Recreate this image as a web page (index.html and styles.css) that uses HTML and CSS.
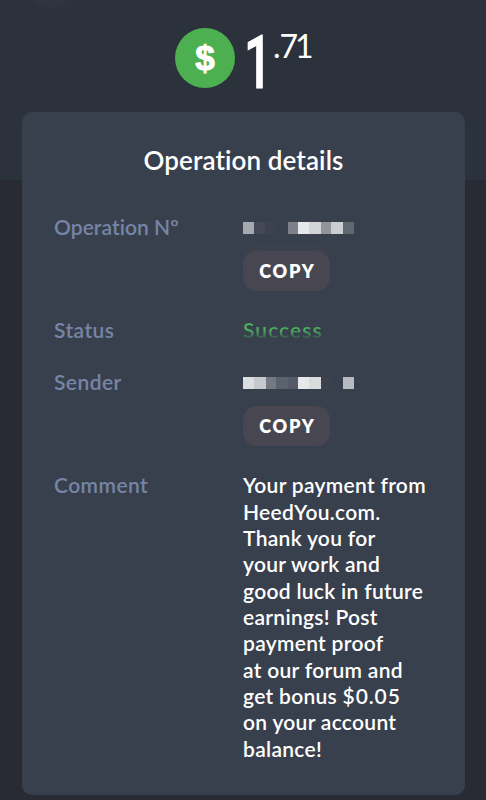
FILE: index.html
```html
<!DOCTYPE html>
<html lang="en">
<head>
<meta charset="utf-8">
<title>Operation details</title>
<link rel="stylesheet" href="styles.css">
</head>
<body>
<main class="page">
  <div class="handle"></div>
  <header class="amount">
    <span class="coin"><b class="coin-sign">$</b></span>
    <span class="whole">1</span>
    <span class="cents"><span class="point">.</span>71</span>
  </header>
  <section class="card">
    <h1>Operation details</h1>
    <dl class="details">
      <dt>Operation Nº</dt>
      <dd>
        <div class="line"><svg class="mask" width="111" height="12" viewBox="0 0 111 12" shape-rendering="crispEdges"><path fill="#a6a9af" d="M0 0h11v12H0z"/><path fill="#434957" d="M11 0h11v12H11z"/><path fill="#3c414e" d="M22 0h11v12H22z"/><path fill="#7b808a" d="M45 0h10v12H45z"/><path fill="#e6e8ea" d="M55 0h11v12H55z"/><path fill="#d2d4d8" d="M66 0h12v12H66z"/><path fill="#90949b" d="M78 0h10v12H78z"/><path fill="#cccdd3" d="M88 0h12v12H88z"/><path fill="#606771" d="M100 0h11v12h-11z"/></svg></div>
        <button class="copy copy-shadowed" type="button">COPY</button>
      </dd>
      <dt class="wide">Status</dt>
      <dd><span class="status">Success</span></dd>
      <dt class="wide">Sender</dt>
      <dd>
        <div class="line"><svg class="mask" width="111" height="12" viewBox="0 0 111 12" shape-rendering="crispEdges"><path fill="#dcdde1" d="M0 0h11v12H0z"/><path fill="#c5c8cd" d="M11 0h12v12H11z"/><path fill="#727983" d="M23 0h10v12H23z"/><path fill="#5b616d" d="M33 0h12v12H33z"/><path fill="#555b68" d="M45 0h10v12H45z"/><path fill="#e6e8ea" d="M55 0h11v12H55z"/><path fill="#d9dbdf" d="M66 0h12v12H66z"/><path fill="#3d414e" d="M78 0h9v12H78z"/><path fill="#b7bac0" d="M100 0h11v12h-11z"/></svg></div>
        <button class="copy" type="button">COPY</button>
      </dd>
      <dt class="wide">Comment</dt>
      <dd class="comment">Your payment from<br>HeedYou.com.<br>Thank you for<br>your work and<br>good luck in future<br>earnings! Post<br>payment proof<br>at our forum and<br>get bonus <span class="sum">$0.05</span><br>on your account<br>balance!</dd>
    </dl>
  </section>
</main>
</body>
</html>
```
FILE: styles.css
```css
* { box-sizing: border-box; }
body {
  margin: 0;
  background: #292b34;
  color: #fff;
  font-family: Lato, "Open Sans", sans-serif;
  font-variant-ligatures: none;
}
.page {
  position: relative;
  height: 800px;
  overflow: hidden;
  padding: 28px 21px 0 22px;
  background: linear-gradient(#2c323b 0 180px, #292b34 180px);
}
.handle {
  position: absolute;
  left: 31px;
  top: -32px;
  width: 40px;
  height: 40px;
  border-radius: 50%;
  background: #2f353e;
}
.amount {
  display: flex;
  height: 84px;
  padding-left: 153px;
}
.coin {
  display: flex;
  align-items: center;
  justify-content: center;
  width: 60px;
  height: 60px;
  border-radius: 50%;
  background: #4caf50;
}
.coin-sign {
  font: 700 35px/60px "Liberation Sans", sans-serif;
  -webkit-text-stroke: 1px #fff;
}
.whole {
  width: 35px;
  margin-left: 9px;
  font: 500 74px/70px Roboto, sans-serif;
  transform: scaleX(.66);
  transform-origin: left;
  -webkit-text-stroke: 1px #fff;
}
.cents {
  margin-left: -6px;
  font: 400 32px/35px Lato, sans-serif;
  letter-spacing: -3px;
}
.point { letter-spacing: -1px; }
.card {
  height: 683px;
  padding: 32px 32px 0;
  border-radius: 10px;
  background: #39404d;
}
h1 {
  margin: 0 0 38px;
  font-size: 26px;
  line-height: 32px;
  font-weight: 600;
  text-align: center;
  letter-spacing: .1px;
}
.details {
  display: grid;
  grid-template-columns: 189px 1fr;
  row-gap: 26px;
  margin: 0;
  font-size: 21px;
  line-height: 26.35px;
  font-weight: 600;
}
dt {
  color: #7685a5;
  letter-spacing: .05px;
}
.wide { letter-spacing: .45px; }
dd { margin: 0; white-space: nowrap; }
.comment { letter-spacing: .3px; }
.sum { letter-spacing: .9px; }
.line {
  display: flex;
  align-items: center;
  height: 26px;
  padding-top: 2px;
}
.mask { display: block; }
.copy {
  display: block;
  width: 87px;
  height: 40px;
  margin-top: 11px;
  padding: 0;
  border: 0;
  border-radius: 14px;
  background: #484751;
  color: #fff;
  font: 800 18px/38px Lato, sans-serif;
  letter-spacing: 1.8px;
  text-indent: 2px;
}
.copy-shadowed {
  background: #484751;
  box-shadow: 0 -6px 0 -1px #3c414d;
}
.status {
  letter-spacing: 1.05px;
  background: linear-gradient(#4caf5d 0 52%, #417b56 72%, #3b5150 84%);
  -webkit-background-clip: text;
  background-clip: text;
  color: transparent;
}
```
